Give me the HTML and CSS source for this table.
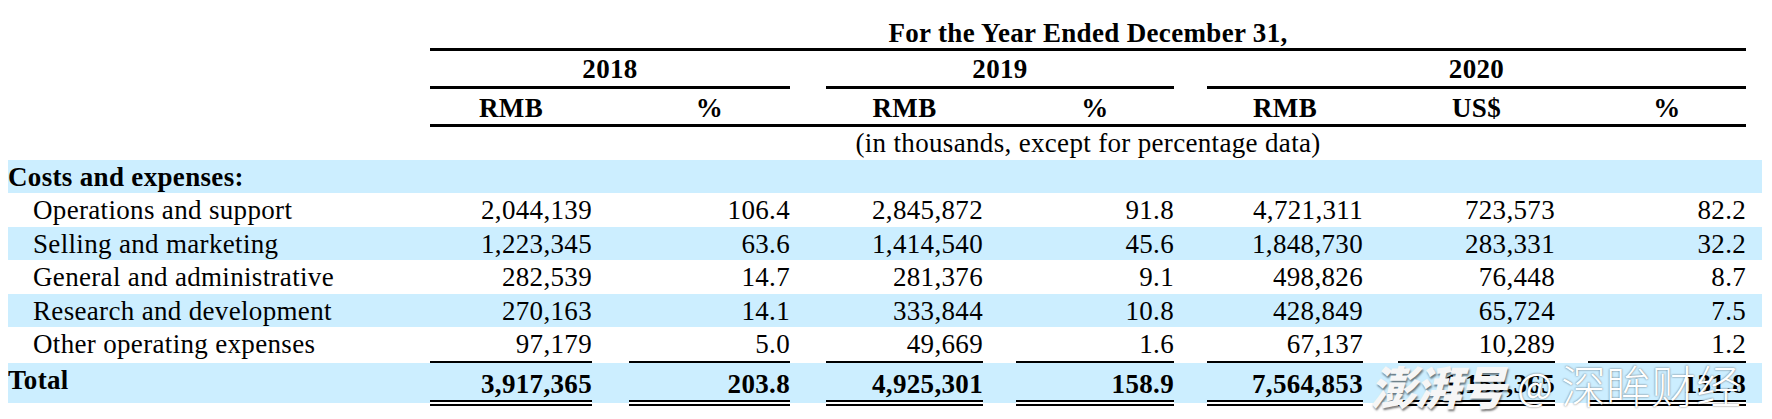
FILE: index.html
```html
<!DOCTYPE html>
<html lang="en">
<head>
<meta charset="utf-8">
<title>Costs and expenses</title>
<link rel="stylesheet" href="styles.css">
</head>
<body>
<table class="fin">
  <colgroup>
    <col class="c-label"><col class="c-a"><col class="c-g37"><col class="c-b"><col class="c-g36"><col class="c-c"><col class="c-g33"><col class="c-d"><col class="c-g33"><col class="c-e"><col class="c-g35"><col class="c-f"><col class="c-g33"><col class="c-g"><col class="c-trail">
  </colgroup>
  <tr class="h-title">
    <td></td>
    <td colspan="13" class="title">For the Year Ended December 31,</td>
    <td></td>
  </tr>
  <tr class="h-year">
    <td></td>
    <td colspan="3" class="yr">2018</td>
    <td></td>
    <td colspan="3" class="yr">2019</td>
    <td></td>
    <td colspan="5" class="yr">2020</td>
    <td></td>
  </tr>
  <tr class="h-cur">
    <td></td>
    <td class="cur">RMB</td><td class="cur"></td>
    <td class="cur">%</td><td class="cur"></td>
    <td class="cur">RMB</td><td class="cur"></td>
    <td class="cur">%</td><td class="cur"></td>
    <td class="cur">RMB</td><td class="cur"></td>
    <td class="cur">US$</td><td class="cur"></td>
    <td class="cur">%</td>
    <td></td>
  </tr>
  <tr class="h-note">
    <td></td>
    <td colspan="13" class="note">(in thousands, except for percentage data)</td>
    <td></td>
  </tr>
  <tr class="r shade r33">
    <td class="lbl bold">Costs and expenses:</td>
    <td></td><td></td><td></td><td></td><td></td><td></td><td></td><td></td><td></td><td></td><td></td><td></td><td></td><td></td>
  </tr>
  <tr class="r r34">
    <td class="lbl sub">Operations and support</td>
    <td class="num">2,044,139</td><td></td><td class="num">106.4</td><td></td>
    <td class="num">2,845,872</td><td></td><td class="num">91.8</td><td></td>
    <td class="num">4,721,311</td><td></td><td class="num">723,573</td><td></td><td class="num">82.2</td><td></td>
  </tr>
  <tr class="r shade r33">
    <td class="lbl sub">Selling and marketing</td>
    <td class="num">1,223,345</td><td></td><td class="num">63.6</td><td></td>
    <td class="num">1,414,540</td><td></td><td class="num">45.6</td><td></td>
    <td class="num">1,848,730</td><td></td><td class="num">283,331</td><td></td><td class="num">32.2</td><td></td>
  </tr>
  <tr class="r r34">
    <td class="lbl sub">General and administrative</td>
    <td class="num">282,539</td><td></td><td class="num">14.7</td><td></td>
    <td class="num">281,376</td><td></td><td class="num">9.1</td><td></td>
    <td class="num">498,826</td><td></td><td class="num">76,448</td><td></td><td class="num">8.7</td><td></td>
  </tr>
  <tr class="r shade r33">
    <td class="lbl sub">Research and development</td>
    <td class="num">270,163</td><td></td><td class="num">14.1</td><td></td>
    <td class="num">333,844</td><td></td><td class="num">10.8</td><td></td>
    <td class="num">428,849</td><td></td><td class="num">65,724</td><td></td><td class="num">7.5</td><td></td>
  </tr>
  <tr class="r r34">
    <td class="lbl sub">Other operating expenses</td>
    <td class="num">97,179</td><td></td><td class="num">5.0</td><td></td>
    <td class="num">49,669</td><td></td><td class="num">1.6</td><td></td>
    <td class="num">67,137</td><td></td><td class="num">10,289</td><td></td><td class="num">1.2</td><td></td>
  </tr>
  <tr class="total shade">
    <td class="lbl bold">Total</td>
    <td class="num tot">3,917,365</td><td></td><td class="num tot">203.8</td><td></td>
    <td class="num tot">4,925,301</td><td></td><td class="num tot">158.9</td><td></td>
    <td class="num tot">7,564,853</td><td></td><td class="num tot">1,159,365</td><td></td><td class="num tot">131.8</td><td></td>
  </tr>
</table>
<div class="wm"><span class="wm-logo">澎湃号</span><span class="wm-at">@</span><span class="wm-name">深眸财经</span></div>
</body>
</html>
```

FILE: styles.css
```css
html, body {
  background: #ffffff;
}
body {
  margin: 8px;
  font-family: "Liberation Serif", "Times New Roman", serif;
  font-size: 27px;
  letter-spacing: 0.33px;
  color: #000000;
}

.fin {
  border-collapse: separate;
  border-spacing: 0;
  table-layout: fixed;
  width: 1754px;
}
.c-label { width: 422px; }
.c-a { width: 162px; }
.c-b { width: 161px; }
.c-c { width: 157px; }
.c-d { width: 158px; }
.c-e { width: 156px; }
.c-f { width: 157px; }
.c-g { width: 158px; }
.c-g37 { width: 37px; }
.c-g36 { width: 36px; }
.c-g35 { width: 35px; }
.c-g33 { width: 33px; }
.c-trail { width: 16px; }

.fin td {
  padding: 0;
  line-height: 29px;
  vertical-align: top;
  white-space: nowrap;
}

/* header rows */
.h-title td { padding-top: 10px; line-height: 30px; }
.title {
  font-weight: bold;
  text-align: center;
  border-bottom: 3px solid #000;
}
.h-year td { padding: 3px 0 2px; line-height: 30px; }
.yr {
  font-weight: bold;
  text-align: center;
  border-bottom: 3px solid #000;
}
.h-cur td { padding: 4px 0 1px; line-height: 30px; }
.cur {
  font-weight: bold;
  text-align: center;
  border-bottom: 3px solid #000;
}
.h-note td { padding: 1px 0 2px; line-height: 30px; }
.note { text-align: center; }

/* body rows */
.shade td { background: #cceeff; }
.r33 td { padding: 3px 0 1px; }
.r34 td { padding: 3px 0 2px; }
.lbl { text-align: left; }
.bold { font-weight: bold; }
.sub { padding-left: 25px !important; }
.num { text-align: right; }

.total td {
  background-clip: padding-box;
  border-top: 2px solid transparent;
  border-bottom: 3px solid transparent;
  padding: 4px 0 0;
}
.total .lbl { padding-top: 3px; }
.total .tot {
  font-weight: bold;
  border-top: 2px solid #000;
  border-bottom: 6px double #000;
  padding: 7px 0 1px;
}

/* watermark overlay */
.wm {
  position: absolute;
  left: 1370px;
  top: 362px;
  display: flex;
  align-items: center;
  font-family: "Noto Sans CJK SC", sans-serif;
  color: #ffffff;
  letter-spacing: 0;
  line-height: 46px;
}
.wm-logo {
  font-size: 46px;
  font-weight: 900;
  font-style: italic;
  letter-spacing: -1px;
  color: #f6f6f6;
  text-shadow: 1px 2px 2px rgba(0, 0, 0, 0.5);
}
.wm-at {
  font-size: 38px;
  margin-left: 12px;
  text-shadow: 0 0 2px rgba(0, 0, 0, 0.6);
}
.wm-name {
  font-size: 45px;
  font-weight: 300;
  margin-left: 8px;
  text-shadow: 0 0 2px rgba(0, 0, 0, 0.6);
}
```
